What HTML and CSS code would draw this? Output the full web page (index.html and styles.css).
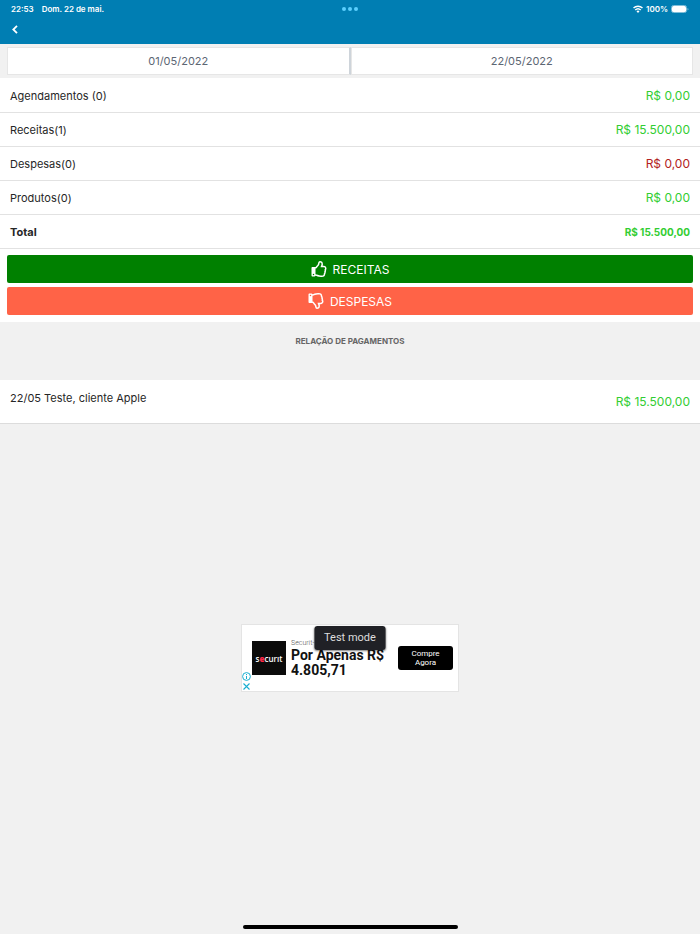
FILE: index.html
```
<!DOCTYPE html>
<html lang="pt-BR">
    <head>
        <meta charset="UTF-8" />
        <meta name="viewport" content="width=device-width, initial-scale=1.0" />
        <title>Pagamentos</title>
        <link rel="stylesheet" href="styles.css">
    </head>
    <body>
        <svg width="0" height="0" class="defs">
            <symbol id="thumb" viewBox="0 0 480 512">
                <path fill="#fff" d="M466.270 286.690C475.040 271.840 480 256 480 236.850c0-44.015-37.218-85.580-85.820-85.580H357.700c4.920-12.810 8.850-28.130 8.850-46.540C366.550 31.936 328.860 0 271.280 0c-61.607 0-58.093 94.933-71.760 108.600-22.747 22.747-49.615 66.447-68.760 83.400H32c-17.673 0-32 14.327-32 32v240c0 17.673 14.327 32 32 32h64c14.893 0 27.408-10.174 30.978-23.950 44.509 1.001 75.060 39.940 177.802 39.940 7.220 0 15.220.010 22.220.010 77.117 0 111.986-39.423 112.940-95.330 13.319-18.425 20.299-43.122 17.340-66.990 9.854-18.452 13.664-40.343 8.990-62.990zm-61.750 53.830c12.560 21.130 1.260 49.410-13.940 57.570 7.700 48.780-17.608 65.900-53.120 65.900h-37.820c-71.639 0-118.029-37.820-171.640-37.820V240h10.920c28.360 0 67.980-70.890 94.540-97.460 28.360-28.360 18.910-75.630 37.820-94.540 47.270 0 47.270 32.980 47.270 56.730 0 39.170-28.360 56.720-28.360 94.540h103.990c21.110 0 37.730 18.910 37.820 37.820.090 18.900-12.820 37.810-22.270 37.810 13.489 14.555 16.371 45.236-5.210 65.620zM88 432c0 13.255-10.745 24-24 24s-24-10.745-24-24 10.745-24 24-24 24 10.745 24 24z" />
            </symbol>
        </svg>

        <header class="header">
            <div class="status">
                <div class="status-left">
                    <span>22:53</span>
                    <span>Dom. 22 de mai.</span>
                </div>
                <div class="dots"><i></i><i></i><i></i></div>
                <div class="status-right">
                    <svg width="10" height="8" viewBox="0 0 20 16" fill="none" stroke="#fff" stroke-width="3">
                        <path d="M1 6a13 13 0 0 1 18 0" />
                        <path d="M4.500 10a8 8 0 0 1 11 0" />
                        <path d="M7 12.500a4.500 4.500 0 0 1 6 0L10 16z" fill="#fff" stroke="none" />
                    </svg>
                    <span>100%</span>
                    <svg width="18" height="8" viewBox="0 0 18 8">
                        <rect x="0.500" y="0.500" width="15" height="7" rx="2" fill="none" stroke="#7fbfda" />
                        <rect x="1" y="1" width="14" height="6" rx="1.500" fill="#fff" />
                        <path d="M16.500 3v2.500q1-.4 1-1.200t-1-1.300z" fill="#7fbfda" />
                    </svg>
                </div>
            </div>
            <button class="back" aria-label="Voltar">
                <svg width="6" height="9" viewBox="0 0 6 9" fill="none" stroke="#fff" stroke-width="1.800">
                    <path d="M5 .8L1.300 4.500 5 8.200" />
                </svg>
            </button>
        </header>

        <div class="dates">
            <input class="date" type="text" value="01/05/2022" aria-label="Data inicial" />
            <input class="date" type="text" value="22/05/2022" aria-label="Data final" />
        </div>

        <main class="main">
            <ul class="list">
                <li><span>Agendamentos (0)</span><span class="value">R$ 0,00</span></li>
                <li><span>Receitas(1)</span><span class="value">R$ 15.500,00</span></li>
                <li><span>Despesas(0)</span><span class="value red">R$ 0,00</span></li>
                <li><span>Produtos(0)</span><span class="value">R$ 0,00</span></li>
                <li class="total"><span>Total</span><span class="value">R$ 15.500,00</span></li>
            </ul>
            <div class="buttons">
                <button class="btn green">
                    <svg width="16" height="16"><use href="#thumb" /></svg>
                    RECEITAS
                </button>
                <button class="btn tomato">
                    <svg class="down" width="16" height="16"><use href="#thumb" /></svg>
                    DESPESAS
                </button>
            </div>
            <h2 class="title">RELAÇÃO DE PAGAMENTOS</h2>
            <div class="payment">
                <span>22/05 Teste, cliente Apple</span>
                <span class="value">R$ 15.500,00</span>
            </div>
        </main>

        <div class="ad-area">
            <div class="ad">
                <div class="ad-icons">
                    <svg width="9" height="9" viewBox="0 0 18 18" fill="none" stroke="#18aed0" stroke-width="2">
                        <circle cx="9" cy="9" r="7.800" />
                        <path d="M9 4v2.200M9 8v6" />
                    </svg>
                    <svg width="9" height="9" viewBox="0 0 18 18" fill="none" stroke="#18aed0" stroke-width="2.200">
                        <path d="M3 3l12 12M15 3L3 15" />
                    </svg>
                </div>
                <div class="ad-logo"><span>s<b>e</b>curıt</span></div>
                <div class="ad-text">
                    <div class="ad-name">Securit-</div>
                    <div class="ad-title">Por Apenas R$ 4.805,71</div>
                </div>
                <button class="ad-btn">Compre Agora</button>
                <div class="test">Test mode</div>
            </div>
        </div>

        <footer class="footer">
            <div class="home"></div>
        </footer>
    </body>
</html>
```
FILE: styles.css
```
* {
    margin: 0;
    padding: 0;
    box-sizing: border-box;
}
body {
    display: flex;
    flex-direction: column;
    min-height: 100vh;
    background-color: #f1f1f1;
    color: #262626;
    font-family: Inter, "Liberation Sans", sans-serif;
    font-size: 11px;
}
button,
input {
    font-family: inherit;
    border: none;
}
button {
    cursor: pointer;
}
.defs {
    position: absolute;
}

.header {
    height: 44px;
    background-color: #007eb3;
    color: white;
}
.status {
    display: grid;
    grid-template-columns: 1fr auto 1fr;
    align-items: center;
    height: 17px;
    padding: 0 11px;
    font-size: 8px;
    font-weight: 600;
}
.status-left {
    display: flex;
    gap: 8px;
}
.status-right {
    display: flex;
    align-items: center;
    justify-content: flex-end;
    gap: 3px;
}
.dots {
    display: flex;
    gap: 2px;
}
.dots i {
    width: 4px;
    height: 4px;
    background-color: #5bd0ff;
    border-radius: 50%;
}
.back {
    display: flex;
    align-items: center;
    height: 24px;
    padding: 0 12px;
    background: none;
}

.dates {
    display: flex;
    height: 34px;
    padding: 3px 7px;
}
.date {
    flex: 1;
    min-width: 0;
    height: 28px;
    border: 1px solid #e6e6e6;
    background-color: white;
    color: #5c6673;
    font-size: 11px;
    text-align: center;
}
.date:first-child {
    border-right: 2px solid #ced4da;
}

.main {
    background-color: white;
}
.list {
    padding-top: 1px;
    list-style: none;
}
.list li {
    display: flex;
    align-items: center;
    justify-content: space-between;
    height: 34px;
    padding: 0 10px;
    border-bottom: 1px solid #e2e2e2;
}
.value {
    color: #32cd32;
    font-size: 12px;
}
.red {
    color: #b22222;
}
.list .total {
    font-weight: 700;
}
.total .value {
    font-size: 10px;
}

.buttons {
    display: flex;
    flex-direction: column;
    gap: 4px;
    padding: 6px 7px 7px;
}
.btn {
    display: flex;
    align-items: center;
    justify-content: center;
    gap: 6px;
    height: 28px;
    border-radius: 2px;
    color: white;
    font-size: 12px;
}
.btn .down {
    transform: scaleY(-1);
}
.green {
    background-color: green;
}
.tomato {
    background-color: tomato;
}

.title {
    height: 58px;
    padding-top: 12px;
    background-color: #f1f1f1;
    color: #666;
    font-size: 8px;
    font-weight: 700;
    line-height: 14px;
    text-align: center;
}
.payment {
    display: flex;
    align-items: center;
    justify-content: space-between;
    height: 44px;
    padding: 0 10px;
    border-bottom: 1px solid #dcdcdc;
}
.payment span:first-child {
    align-self: flex-start;
    padding-top: 11px;
}

.ad-area {
    display: flex;
    flex: 1;
    align-items: center;
    justify-content: center;
}
.ad {
    display: flex;
    align-items: center;
    position: relative;
    width: 218px;
    height: 68px;
    padding-right: 5px;
    border: 1px solid #e4e4e4;
    background-color: white;
    font-family: Roboto, sans-serif;
}
.ad-icons {
    display: flex;
    flex-direction: column;
    align-self: flex-end;
    gap: 1px;
    width: 10px;
}
.ad-logo {
    display: flex;
    align-items: center;
    justify-content: center;
    width: 34px;
    height: 34px;
    background-color: #0b0b0b;
    color: white;
    font-family: "Open Sans", sans-serif;
    font-size: 8px;
    font-weight: 600;
}
.ad-logo b {
    color: #ff2846;
}
.ad-text {
    flex: 1;
    padding-left: 5px;
}
.ad-name {
    color: #555;
    font-size: 7px;
    font-weight: 300;
    line-height: 9px;
}
.ad-title {
    color: #111;
    font-size: 14px;
    font-weight: 700;
    line-height: 15px;
}
.ad-btn {
    width: 55px;
    height: 24px;
    padding: 0 8px;
    border-radius: 3px;
    background-color: black;
    color: white;
    font-family: inherit;
    font-size: 8px;
    line-height: 9px;
}
.test {
    position: absolute;
    top: 1px;
    left: 50%;
    transform: translateX(-50%);
    width: 71px;
    border-radius: 3px;
    background-color: #202126;
    box-shadow: 0 1px 2px rgba(0, 0, 0, 0.5);
    color: #ddd;
    font-size: 11px;
    line-height: 24px;
    text-align: center;
}

.footer {
    display: flex;
    align-items: flex-end;
    justify-content: center;
    height: 42px;
    padding-bottom: 5px;
}
.home {
    width: 215px;
    height: 4px;
    border-radius: 2px;
    background-color: black;
}
```
